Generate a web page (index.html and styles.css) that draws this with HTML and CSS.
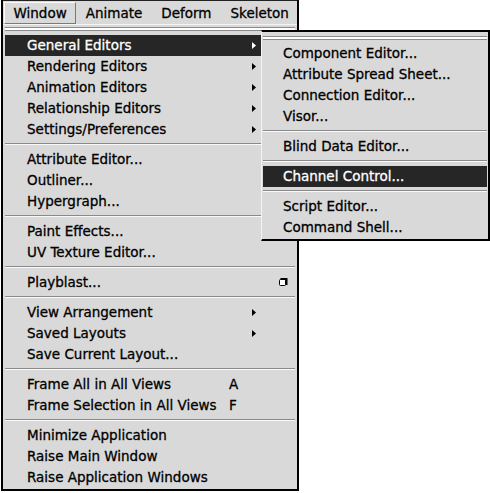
FILE: index.html
```html
<!DOCTYPE html>
<html>
<head>
    <meta charset="UTF-8">
    <title>Window Menu</title>
    <link rel="stylesheet" href="styles.css">
</head>
<body>
    <div class="app">
        <div class="menubar">
            <span class="menubar-item active">Window</span>
            <span class="menubar-item">Animate</span>
            <span class="menubar-item">Deform</span>
            <span class="menubar-item">Skeleton</span>
        </div>

        <div class="menu">
            <div class="tearoff"></div>
            <div class="item selected">
                <span class="label">General Editors</span><span class="accel"></span>
                <span class="arrow"><svg width="4" height="7" viewBox="0 0 4 7"><polygon points="0,0 4,3.5 0,7" fill="#fff"/></svg></span><span class="opt"></span>
            </div>
            <div class="item">
                <span class="label">Rendering Editors</span><span class="accel"></span>
                <span class="arrow"><svg width="4" height="7" viewBox="0 0 4 7"><polygon points="0,0 4,3.5 0,7"/></svg></span><span class="opt"></span>
            </div>
            <div class="item">
                <span class="label">Animation Editors</span><span class="accel"></span>
                <span class="arrow"><svg width="4" height="7" viewBox="0 0 4 7"><polygon points="0,0 4,3.5 0,7"/></svg></span><span class="opt"></span>
            </div>
            <div class="item">
                <span class="label">Relationship Editors</span><span class="accel"></span>
                <span class="arrow"><svg width="4" height="7" viewBox="0 0 4 7"><polygon points="0,0 4,3.5 0,7"/></svg></span><span class="opt"></span>
            </div>
            <div class="item">
                <span class="label">Settings/Preferences</span><span class="accel"></span>
                <span class="arrow"><svg width="4" height="7" viewBox="0 0 4 7"><polygon points="0,0 4,3.5 0,7"/></svg></span><span class="opt"></span>
            </div>
            <div class="sep"></div>
            <div class="item"><span class="label">Attribute Editor...</span></div>
            <div class="item"><span class="label">Outliner...</span></div>
            <div class="item"><span class="label">Hypergraph...</span></div>
            <div class="sep"></div>
            <div class="item"><span class="label">Paint Effects...</span></div>
            <div class="item"><span class="label">UV Texture Editor...</span></div>
            <div class="sep"></div>
            <div class="item">
                <span class="label">Playblast...</span><span class="accel"></span><span class="arrow"></span>
                <span class="opt"><svg width="9" height="9" viewBox="0 0 9 9"><rect x="0.5" y="1.5" width="6" height="6" rx="1" fill="#fff" stroke="#000"/><path d="M1.5 1 H7.5 V7" fill="none" stroke="#000" stroke-width="2"/></svg></span>
            </div>
            <div class="sep"></div>
            <div class="item">
                <span class="label">View Arrangement</span><span class="accel"></span>
                <span class="arrow"><svg width="4" height="7" viewBox="0 0 4 7"><polygon points="0,0 4,3.5 0,7"/></svg></span><span class="opt"></span>
            </div>
            <div class="item">
                <span class="label">Saved Layouts</span><span class="accel"></span>
                <span class="arrow"><svg width="4" height="7" viewBox="0 0 4 7"><polygon points="0,0 4,3.5 0,7"/></svg></span><span class="opt"></span>
            </div>
            <div class="item"><span class="label">Save Current Layout...</span></div>
            <div class="sep"></div>
            <div class="item"><span class="label">Frame All in All Views</span><span class="accel">A</span></div>
            <div class="item"><span class="label">Frame Selection in All Views</span><span class="accel">F</span></div>
            <div class="sep"></div>
            <div class="item"><span class="label">Minimize Application</span></div>
            <div class="item"><span class="label">Raise Main Window</span></div>
            <div class="item"><span class="label">Raise Application Windows</span></div>
        </div>

        <!-- General Editors cascade -->
        <div class="submenu">
            <div class="tearoff"></div>
            <div class="sub-item">Component Editor...</div>
            <div class="sub-item">Attribute Spread Sheet...</div>
            <div class="sub-item">Connection Editor...</div>
            <div class="sub-item">Visor...</div>
            <div class="sep"></div>
            <div class="sub-item">Blind Data Editor...</div>
            <div class="sep"></div>
            <div class="sub-item selected">Channel Control...</div>
            <div class="sep"></div>
            <div class="sub-item">Script Editor...</div>
            <div class="sub-item">Command Shell...</div>
        </div>
    </div>
</body>
</html>
```

FILE: styles.css
```css
body {
    margin: 0;
    background: #fff;
    font-family: "DejaVu Sans", Verdana, sans-serif;
    font-size: 13.5px;
    color: #000;
    -webkit-text-stroke: 0.3px;
}
.app {
    position: relative;
    width: 294px;
    margin-left: 1px;
    border: 2px solid #000;
    border-top: 0;
    background: #d9d9d9;
}
.menubar {
    display: flex;
    height: 23px;
    padding-left: 1px;
    border-top: 1px solid #222;
    border-bottom: 1px solid #f4f4f4;
    white-space: nowrap;
}
.menubar-item {
    margin-top: 1px;
    padding: 0 8.5px;
    line-height: 20px;
    border: 1px solid transparent;
}
.menubar-item.active {
    border-color: #fafafa #7a7a7a #7a7a7a #fafafa;
}
.menu {
    padding: 0 2px 1px;
}
.tearoff {
    height: 2px;
    margin: 2px 0 4px;
    background: #fff;
    border-top: 1px solid #8a8a8a;
    border-bottom: 1px solid #8a8a8a;
}
.sep {
    margin: 3px 0 4px;
    border-top: 1px solid #8a8a8a;
    border-bottom: 1px solid #fafafa;
}
.item {
    display: grid;
    grid-template-columns: 1fr 20px 20px 27px;
    height: 21px;
    line-height: 21px;
    padding: 0 3px 0 22px;
    white-space: nowrap;
}
.item.selected,
.sub-item.selected {
    background: #262626;
    color: #fff;
}
.accel {
    padding-left: 4px;
}
.arrow {
    display: flex;
    align-items: center;
    padding-left: 7px;
}
.opt {
    display: flex;
    align-items: center;
    padding-left: 14px;
}
.submenu {
    position: absolute;
    left: 258px;
    top: 30px;
    width: 224px;
    padding: 0 1px 1px;
    background: #d9d9d9;
    border: 2px solid #000;
    border-left: 1px solid #f4f4f4;
}
.submenu .tearoff {
    margin: 4px 0 3px;
}
.sub-item {
    height: 21px;
    line-height: 21px;
    padding-left: 20px;
    white-space: nowrap;
}
```
